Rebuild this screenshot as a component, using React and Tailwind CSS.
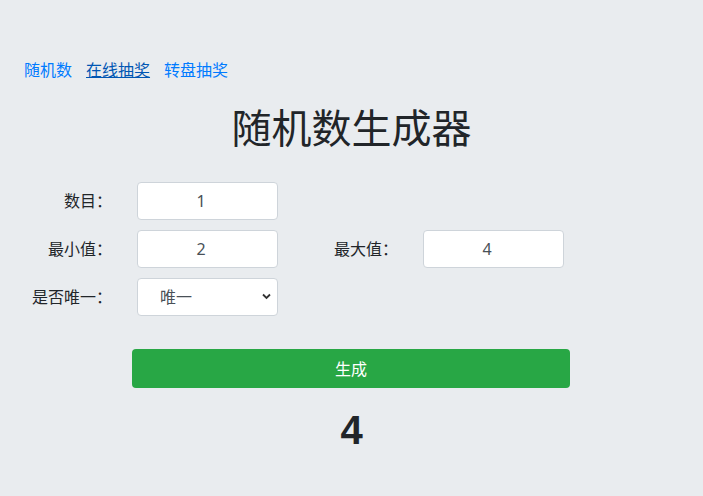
import React, { useState } from "react";

const font = { fontFamily: '"Noto Sans", "Noto Sans CJK SC", sans-serif' };

const Field = ({ label, children }) => (
  <div className="flex items-center">
    <label className="w-[88px] text-right text-[16px] text-[#212529]">{label}</label>
    <div className="ml-[25px]">{children}</div>
  </div>
);

const inputCls =
  "w-[141px] h-[38px] bg-white border border-[#ced4da] rounded-[4px] pr-[13px] text-center text-[16px] text-[#495057] outline-none";

const App = () => {
  const [count, setCount] = useState("1");
  const [min, setMin] = useState("2");
  const [max, setMax] = useState("4");
  const [unique, setUnique] = useState("1");
  const [result, setResult] = useState("4");

  const generate = () => {
    const lo = parseInt(min, 10);
    const hi = parseInt(max, 10);
    setResult(String(lo + Math.floor(Math.random() * (hi - lo + 1))));
  };

  return (
    <div className="min-h-screen bg-[#e9ecef] pt-[58px]" style={font}>
      <nav className="flex gap-[14px] px-6 text-[16px] leading-[24px]">
        <a className="text-[#007bff]">随机数</a>
        <a className="text-[#0056b3] underline">在线抽奖</a>
        <a className="text-[#007bff]">转盘抽奖</a>
      </nav>

      <h1 className="mt-[22px] text-center text-[40px] leading-[48px] text-[#212529]">随机数生成器</h1>

      <div className="mt-[30px] flex flex-col gap-[10px] px-6">
        <Field label="数目：">
          <input className={inputCls} value={count} onChange={(e) => setCount(e.target.value)} />
        </Field>
        <div className="flex items-center gap-[32px]">
          <Field label="最小值：">
            <input className={inputCls} value={min} onChange={(e) => setMin(e.target.value)} />
          </Field>
          <Field label="最大值：">
            <input className={inputCls} value={max} onChange={(e) => setMax(e.target.value)} />
          </Field>
        </div>
        <Field label="是否唯一：">
          <div className="relative">
            <select
              value={unique}
              onChange={(e) => setUnique(e.target.value)}
              className="w-[141px] h-[38px] appearance-none bg-white border border-[#ced4da] rounded-[4px] pl-[22px] text-[16px] text-[#495057] outline-none"
            >
              <option value="1">唯一</option>
              <option value="0">不唯一</option>
            </select>
            <svg
              className="pointer-events-none absolute right-[7px] top-[15px]"
              width="9"
              height="7"
              viewBox="0 0 9 7"
            >
              <path d="M1 1.5 L4.5 5 L8 1.5" fill="none" stroke="#333" strokeWidth="1.8" />
            </svg>
          </div>
        </Field>
      </div>

      <div className="mt-[33px] flex">
        <button
          onClick={generate}
          className="ml-[132px] w-[438px] h-[39px] rounded-[4px] bg-[#28a745] text-white text-[16px]"
        >
          生成
        </button>
      </div>

      <div
        className="mt-[18px] text-center text-[40px] leading-[48px] font-bold text-[#212529]"
        style={{ fontFamily: '"Liberation Sans", sans-serif' }}
      >
        {result}
      </div>
    </div>
  );
};

export default App;
